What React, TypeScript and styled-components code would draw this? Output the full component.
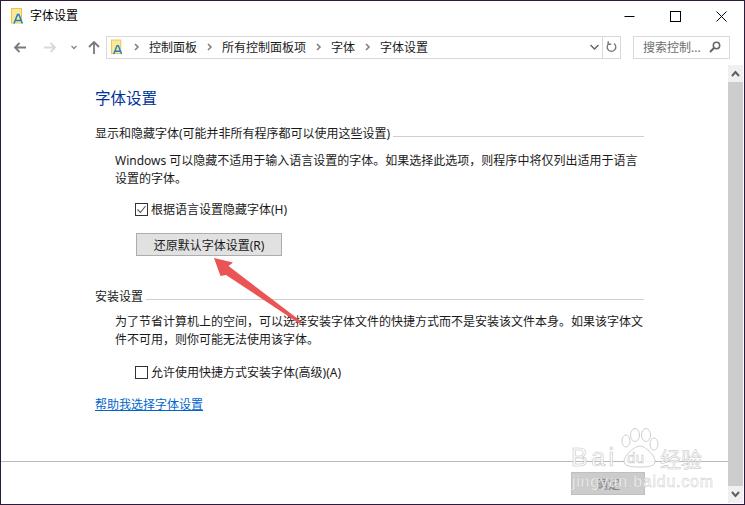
import { ReactNode } from "react";
import styled, { createGlobalStyle } from "styled-components";

const GlobalStyle = createGlobalStyle`
  html, body {
    margin: 0;
    padding: 0;
    background: #fff;
  }
  body {
    font-family: "Noto Sans", "Noto Sans CJK SC", sans-serif;
    font-size: 12px;
    color: #1a1a1a;
  }
`;

const Window = styled.div`
  position: relative;
  box-sizing: border-box;
  width: 745px;
  height: 505px;
  border: 1px solid #2e1a3e;
  background: #fff;
  display: flex;
  flex-direction: column;
  overflow: hidden;
`;

const TitleBar = styled.div`
  height: 30px;
  flex: none;
  display: flex;
  align-items: center;
  padding: 0 0 0 10px;
`;

const TitleText = styled.span`
  margin-left: 5px;
  flex: 1;
  font-size: 12px;
  color: #000;
  line-height: 28px;
`;

const WinButton = styled.div`
  width: 46px;
  height: 30px;
  display: flex;
  align-items: center;
  justify-content: center;
`;

const NavBar = styled.div`
  height: 22px;
  margin-top: 5px;
  flex: none;
  display: flex;
  align-items: center;
  padding-left: 13px;
`;

const NavIcon = styled.div<{ $w: number; $gap?: number }>`
  width: ${(p) => p.$w}px;
  margin-right: ${(p) => p.$gap ?? 0}px;
  height: 22px;
  flex: none;
  display: flex;
  align-items: center;
  justify-content: center;
`;

const AddressBox = styled.div`
  box-sizing: border-box;
  width: 515px;
  height: 23px;
  margin-left: 6px;
  border: 1px solid #d9d9d9;
  display: flex;
  align-items: center;
  padding-left: 4px;
`;

const Crumb = styled.span`
  color: #1a1a1a;
  font-size: 12px;
  white-space: nowrap;
`;

const CrumbSep = styled.div`
  width: 25px;
  display: flex;
  justify-content: center;
  flex: none;
`;

const CrumbItem = styled.span`
  display: contents;
`;

const AddressIcon = styled.div`
  width: 13px;
  flex: none;
  display: flex;
`;

const AddressEnd = styled.div`
  margin-left: auto;
  display: flex;
  align-items: center;
  height: 100%;
`;

const RefreshCell = styled.div`
  width: 17px;
  height: 100%;
  margin-left: 3px;
  border-left: 1px solid #d9d9d9;
  display: flex;
  align-items: center;
  justify-content: center;
`;

const SearchBox = styled.div`
  box-sizing: border-box;
  width: 97px;
  height: 23px;
  margin-left: 12px;
  border: 1px solid #d9d9d9;
  display: flex;
  align-items: center;
  justify-content: space-between;
  padding: 0 8px 0 9px;
  color: #6d6d6d;
  font-size: 12px;
`;

const Body = styled.div`
  flex: 1;
  min-height: 0;
  margin-top: 7px;
  display: flex;
`;

const Main = styled.div`
  flex: 1;
  min-width: 0;
  display: flex;
  flex-direction: column;
`;

const Content = styled.div`
  flex: 1;
  padding: 23px 84px 0 94px;
`;

const Heading = styled.h1`
  margin: 0 0 16px;
  font-size: 15.5px;
  line-height: 20px;
  font-weight: 400;
  color: #003399;
`;

const SectionHead = styled.div<{ $top?: number }>`
  display: flex;
  align-items: center;
  height: 18px;
  margin-top: ${(p) => p.$top ?? 0}px;
  white-space: nowrap;

  &::after {
    content: "";
    flex: 1;
    height: 1px;
    margin: 6px 0 0 3px;
    background: #cfcfcf;
  }
`;

const Paragraph = styled.p<{ $top: number }>`
  margin: ${(p) => p.$top}px 0 0 20px;
  line-height: 18px;
  white-space: nowrap;
`;

const CheckRow = styled.label<{ $top: number }>`
  display: flex;
  align-items: center;
  margin: ${(p) => p.$top}px 0 0 40px;
  height: 18px;
  gap: 3px;
`;

const Box = styled.span`
  box-sizing: border-box;
  width: 13px;
  height: 13px;
  border: 1px solid #333;
  background: #fff;
  display: flex;
  align-items: center;
  justify-content: center;
  flex: none;
`;

const ActionButton = styled.div`
  box-sizing: border-box;
  width: 146px;
  height: 23px;
  margin: 15px 0 0 41px;
  border: 1px solid #adadad;
  background: #e1e1e1;
  display: flex;
  align-items: center;
  justify-content: center;
`;

const HelpLink = styled.a`
  display: inline-block;
  margin-top: 15px;
  color: #0066cc;
  text-decoration: underline;
  line-height: 18px;
`;

const Footer = styled.div`
  box-sizing: border-box;
  flex: none;
  height: 43px;
  border-top: 1px solid #b8b8b8;
  display: flex;
  justify-content: flex-end;
  align-items: flex-start;
  padding: 10px 83px 0 0;
`;

const DisabledButton = styled.div`
  box-sizing: border-box;
  width: 74px;
  height: 23px;
  background: #cccccc;
  border: 1px solid #bfbfbf;
  color: #838383;
  display: flex;
  align-items: center;
  justify-content: center;
`;

const ScrollBar = styled.div`
  width: 15px;
  flex: none;
  margin-right: 1px;
  margin-bottom: 1px;
  display: flex;
  flex-direction: column;
  background: #f0f0f0;
`;

const ScrollCap = styled.div`
  height: 17px;
  flex: none;
  display: flex;
  align-items: center;
  justify-content: center;
`;

const ScrollThumb = styled.div`
  flex: 1;
  background: #cdcdcd;
`;

const ArrowMark = styled.svg`
  position: absolute;
  left: 199px;
  top: 249px;
`;

const Watermark = styled.div`
  position: absolute;
  left: 567px;
  top: 424px;
  width: 150px;
  height: 72px;
  color: rgba(255, 255, 255, 0.85);
  font-family: "Liberation Sans", sans-serif;
  pointer-events: none;
`;

const WatermarkBrand = styled.div`
  position: absolute;
  left: 3px;
  top: 17px;
  font-size: 25px;
  line-height: 30px;
  letter-spacing: 3.5px;
  -webkit-text-stroke: 0.6px #c4c4c4;
`;

const WatermarkDu = styled.div`
  position: absolute;
  left: 59px;
  top: 24px;
  font-size: 15px;
  line-height: 18px;
  letter-spacing: 0.5px;
  -webkit-text-stroke: 0.5px #c4c4c4;
`;

const WatermarkCn = styled.div`
  position: absolute;
  left: 92px;
  top: 19px;
  font-family: "Noto Sans CJK SC", sans-serif;
  font-size: 21px;
  line-height: 28px;
  -webkit-text-stroke: 0.5px #c4c4c4;
`;

const WatermarkUrl = styled.div`
  position: absolute;
  left: 4px;
  top: 48px;
  font-size: 16px;
  line-height: 18px;
  letter-spacing: 0.75px;
  white-space: nowrap;
  -webkit-text-stroke: 0.4px #c4c4c4;
`;

const WatermarkPaw = styled.svg`
  position: absolute;
  left: 53px;
  top: 2px;
`;

const FontIcon = () => (
  <svg width="14" height="16" viewBox="0 0 14 16">
    <rect x="0.5" y="0.5" width="10" height="14.5" fill="#fde79a" stroke="#eec24a" />
    <path d="M3 15.5L6.5 6.5h1.4l3.5 9M4.6 12.6h5.2" fill="none" stroke="#1a7fc4" strokeWidth="1.5" />
  </svg>
);

const Chevron = () => (
  <svg width="6" height="8" viewBox="0 0 6 8">
    <path d="M1 1l3 3-3 3" fill="none" stroke="#808080" strokeWidth="1.6" />
  </svg>
);

const Check = () => (
  <svg width="11" height="11" viewBox="0 0 11 11">
    <path d="M1.5 5.5l3 3 5-6.5" fill="none" stroke="#555" strokeWidth="1.1" />
  </svg>
);

const ScrollChevron = ({ up }: { up?: boolean }) => (
  <svg width="9" height="7" viewBox="0 0 9 7">
    <path d={up ? "M1 6l3.5-4L8 6" : "M1 1l3.5 4L8 1"} fill="none" stroke="#606060" strokeWidth="2" />
  </svg>
);

const Crumbs = ({ items }: { items: string[] }) => (
  <>
    {items.map((item) => (
      <CrumbItem key={item}>
        <CrumbSep>
          <Chevron />
        </CrumbSep>
        <Crumb>{item}</Crumb>
      </CrumbItem>
    ))}
  </>
);

const CheckOption = ({ checked, top, children }: { checked?: boolean; top: number; children: ReactNode }) => (
  <CheckRow $top={top}>
    <Box>{checked && <Check />}</Box>
    <span>{children}</span>
  </CheckRow>
);

export default function App() {
  return (
    <>
      <GlobalStyle />
      <Window>
        <TitleBar>
          <FontIcon />
          <TitleText>字体设置</TitleText>
          <WinButton>
            <svg width="11" height="11" viewBox="0 0 11 11">
              <path d="M0.5 5.5h10" stroke="#000" />
            </svg>
          </WinButton>
          <WinButton>
            <svg width="11" height="11" viewBox="0 0 11 11">
              <rect x="0.5" y="0.5" width="10" height="10" fill="none" stroke="#000" />
            </svg>
          </WinButton>
          <WinButton>
            <svg width="11" height="11" viewBox="0 0 11 11">
              <path d="M0.5 0.5l10 10M10.5 0.5l-10 10" stroke="#000" />
            </svg>
          </WinButton>
        </TitleBar>

        <NavBar>
          <NavIcon $w={12} $gap={18}>
            <svg width="12" height="11" viewBox="0 0 12 11">
              <path d="M5.5 1L1 5.5 5.5 10M1 5.5h11" fill="none" stroke="#7a7a7a" strokeWidth="1.8" />
            </svg>
          </NavIcon>
          <NavIcon $w={12} $gap={15}>
            <svg width="12" height="11" viewBox="0 0 12 11">
              <path d="M6.5 1L11 5.5 6.5 10M11 5.5H0" fill="none" stroke="#d9d9d9" strokeWidth="1.8" />
            </svg>
          </NavIcon>
          <NavIcon $w={6} $gap={11}>
            <svg width="6" height="5" viewBox="0 0 6 5">
              <path d="M0.5 1L3 3.5 5.5 1" fill="none" stroke="#8a8a8a" strokeWidth="1.4" />
            </svg>
          </NavIcon>
          <NavIcon $w={12}>
            <svg width="12" height="13" viewBox="0 0 12 13">
              <path d="M1 6l5-5 5 5M6 1v12" fill="none" stroke="#7a7a7a" strokeWidth="1.8" />
            </svg>
          </NavIcon>
          <AddressBox>
            <AddressIcon>
              <FontIcon />
            </AddressIcon>
            <Crumbs items={["控制面板", "所有控制面板项", "字体", "字体设置"]} />
            <AddressEnd>
              <svg width="9" height="6" viewBox="0 0 9 6">
                <path d="M0.5 1L4.5 5l4-4" fill="none" stroke="#666" strokeWidth="1.5" />
              </svg>
              <RefreshCell>
                <svg width="11" height="12" viewBox="0 0 11 12">
                  <path d="M3 2.5a4.3 4.3 0 1 0 5 0M2.2 0.2v3h3" fill="none" stroke="#7a7a7a" strokeWidth="1.4" />
                </svg>
              </RefreshCell>
            </AddressEnd>
          </AddressBox>
          <SearchBox>
            <span>搜索控制...</span>
            <svg width="12" height="12" viewBox="0 0 12 12">
              <circle cx="7.5" cy="4.5" r="3.2" fill="none" stroke="#666" strokeWidth="1.5" />
              <path d="M5 7L1 11" stroke="#666" strokeWidth="2" />
            </svg>
          </SearchBox>
        </NavBar>

        <Body>
          <Main>
            <Content>
              <Heading>字体设置</Heading>
              <SectionHead>显示和隐藏字体(可能并非所有程序都可以使用这些设置)</SectionHead>
              <Paragraph $top={10}>
                Windows 可以隐藏不适用于输入语言设置的字体。如果选择此选项，则程序中将仅列出适用于语言
                <br />
                设置的字体。
              </Paragraph>
              <CheckOption checked top={12}>根据语言设置隐藏字体(H)</CheckOption>
              <ActionButton>还原默认字体设置(R)</ActionButton>
              <SectionHead $top={31}>安装设置</SectionHead>
              <Paragraph $top={8}>
                为了节省计算机上的空间，可以选择安装字体文件的快捷方式而不是安装该文件本身。如果该字体文
                <br />
                件不可用，则你可能无法使用该字体。
              </Paragraph>
              <CheckOption top={14}>允许使用快捷方式安装字体(高级)(A)</CheckOption>
              <HelpLink>帮助我选择字体设置</HelpLink>
            </Content>
            <Footer>
              <DisabledButton>确定</DisabledButton>
            </Footer>
          </Main>
          <ScrollBar>
            <ScrollCap>
              <ScrollChevron up />
            </ScrollCap>
            <ScrollThumb />
            <ScrollCap>
              <ScrollChevron />
            </ScrollCap>
          </ScrollBar>
        </Body>

        <ArrowMark width="110" height="80" viewBox="0 0 110 80">
          <path d="M14 8L33 12.5 28.5 16 102 72 100 74 26 25 20.5 26Z" fill="#ea5454" />
        </ArrowMark>

        <Watermark>
          <WatermarkPaw width="40" height="42" viewBox="0 0 40 42">
            <g fill="rgba(255,255,255,0.85)" stroke="#cfcfcf" strokeWidth="1">
              <ellipse cx="5" cy="14" rx="4" ry="6" />
              <ellipse cx="14" cy="8" rx="4.5" ry="6.5" />
              <ellipse cx="25" cy="8" rx="4.5" ry="6.5" />
              <ellipse cx="33" cy="17" rx="4" ry="6" />
              <path d="M19 19c-5 0-16 9-16 15 0 5 6 6 16 6s15-1 15-6c0-6-10-15-15-15z" />
            </g>
          </WatermarkPaw>
          <WatermarkBrand>Bai</WatermarkBrand>
          <WatermarkDu>du</WatermarkDu>
          <WatermarkCn>经验</WatermarkCn>
          <WatermarkUrl>jingyan.baidu.com</WatermarkUrl>
        </Watermark>
      </Window>
    </>
  );
}
